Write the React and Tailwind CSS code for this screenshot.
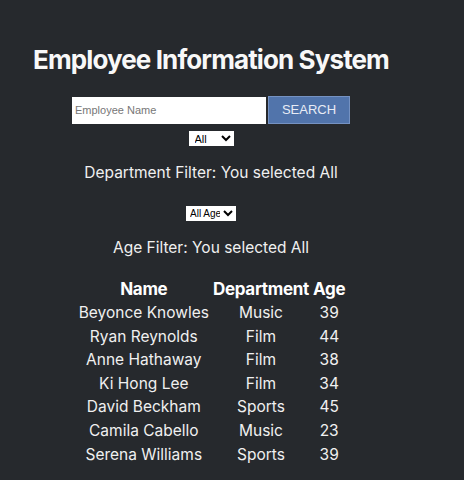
const EMPLOYEES = [
  { name: 'Beyonce Knowles', department: 'Music', age: 39 },
  { name: 'Ryan Reynolds', department: 'Film', age: 44 },
  { name: 'Anne Hathaway', department: 'Film', age: 38 },
  { name: 'Ki Hong Lee', department: 'Film', age: 34 },
  { name: 'David Beckham', department: 'Sports', age: 45 },
  { name: 'Camila Cabello', department: 'Music', age: 23 },
  { name: 'Serena Williams', department: 'Sports', age: 39 },
]

export default function App() {
  return (
    <div className="min-h-screen w-[464px] h-[480px] overflow-hidden bg-[#26292d] text-white font-['Inter',sans-serif]">
      <div className="w-[422px] flex flex-col items-center">
        <h1 className="mt-[44px] text-[26px] leading-[32px] font-bold tracking-[-0.9px] text-[#f8f8f8]">
          Employee Information System
        </h1>

        {/* Search bar */}
        <div className="mt-[20px] flex items-center gap-[2px]">
          <input
            type="text"
            placeholder="Employee Name"
            className="w-[194px] h-[27px] bg-white px-[3px] text-[11px] text-black placeholder:text-[#777] font-['Liberation_Sans',sans-serif] outline-none"
          />
          <button className="w-[82px] h-[28px] bg-[#5174ab] border border-[#7592c2] text-[13px] text-[#e8ecf5] font-['Liberation_Sans',sans-serif]">
            SEARCH
          </button>
        </div>

        <select className="mt-[7px] w-[45px] h-[15px] bg-white text-black text-[11px] leading-[13px] font-['Liberation_Sans',sans-serif] pl-[2px]">
          <option>All</option>
          <option>Music</option>
          <option>Film</option>
          <option>Sports</option>
        </select>

        <p className="mt-[17px] text-[15.5px] leading-[20px] text-[#f0f0f0]">Department Filter: You selected All</p>

        <select className="mt-[23px] w-[50px] h-[15px] p-0 bg-white text-black text-[10px] leading-[13px] font-['Liberation_Sans',sans-serif]">
          <option>All Age</option>
          <option>Under 30</option>
          <option>30 - 40</option>
          <option>Over 40</option>
        </select>

        <p className="mt-[17px] text-[15.5px] leading-[20px] text-[#f0f0f0]">Age Filter: You selected All</p>

        {/* Employee table */}
        <table className="mt-[19px] ml-[2px] text-[15.5px] text-[#f0f0f0]">
          <thead>
            <tr>
              <th className="px-[2px] font-bold text-[17px] leading-[24px] tracking-[-0.3px] text-white">Name</th>
              <th className="px-[2px] font-bold text-[17px] leading-[24px] tracking-[-0.3px] text-white">Department</th>
              <th className="px-[2px] font-bold text-[17px] leading-[24px] tracking-[-0.3px] text-white">Age</th>
            </tr>
          </thead>
          <tbody>
            {EMPLOYEES.map(emp => (
              <tr key={emp.name}>
                <td className="text-center leading-[23.6px] px-[2px]">{emp.name}</td>
                <td className="text-center leading-[23.6px] px-[2px]">{emp.department}</td>
                <td className="text-center leading-[23.6px] px-[2px]">{emp.age}</td>
              </tr>
            ))}
          </tbody>
        </table>
      </div>
    </div>
  )
}
